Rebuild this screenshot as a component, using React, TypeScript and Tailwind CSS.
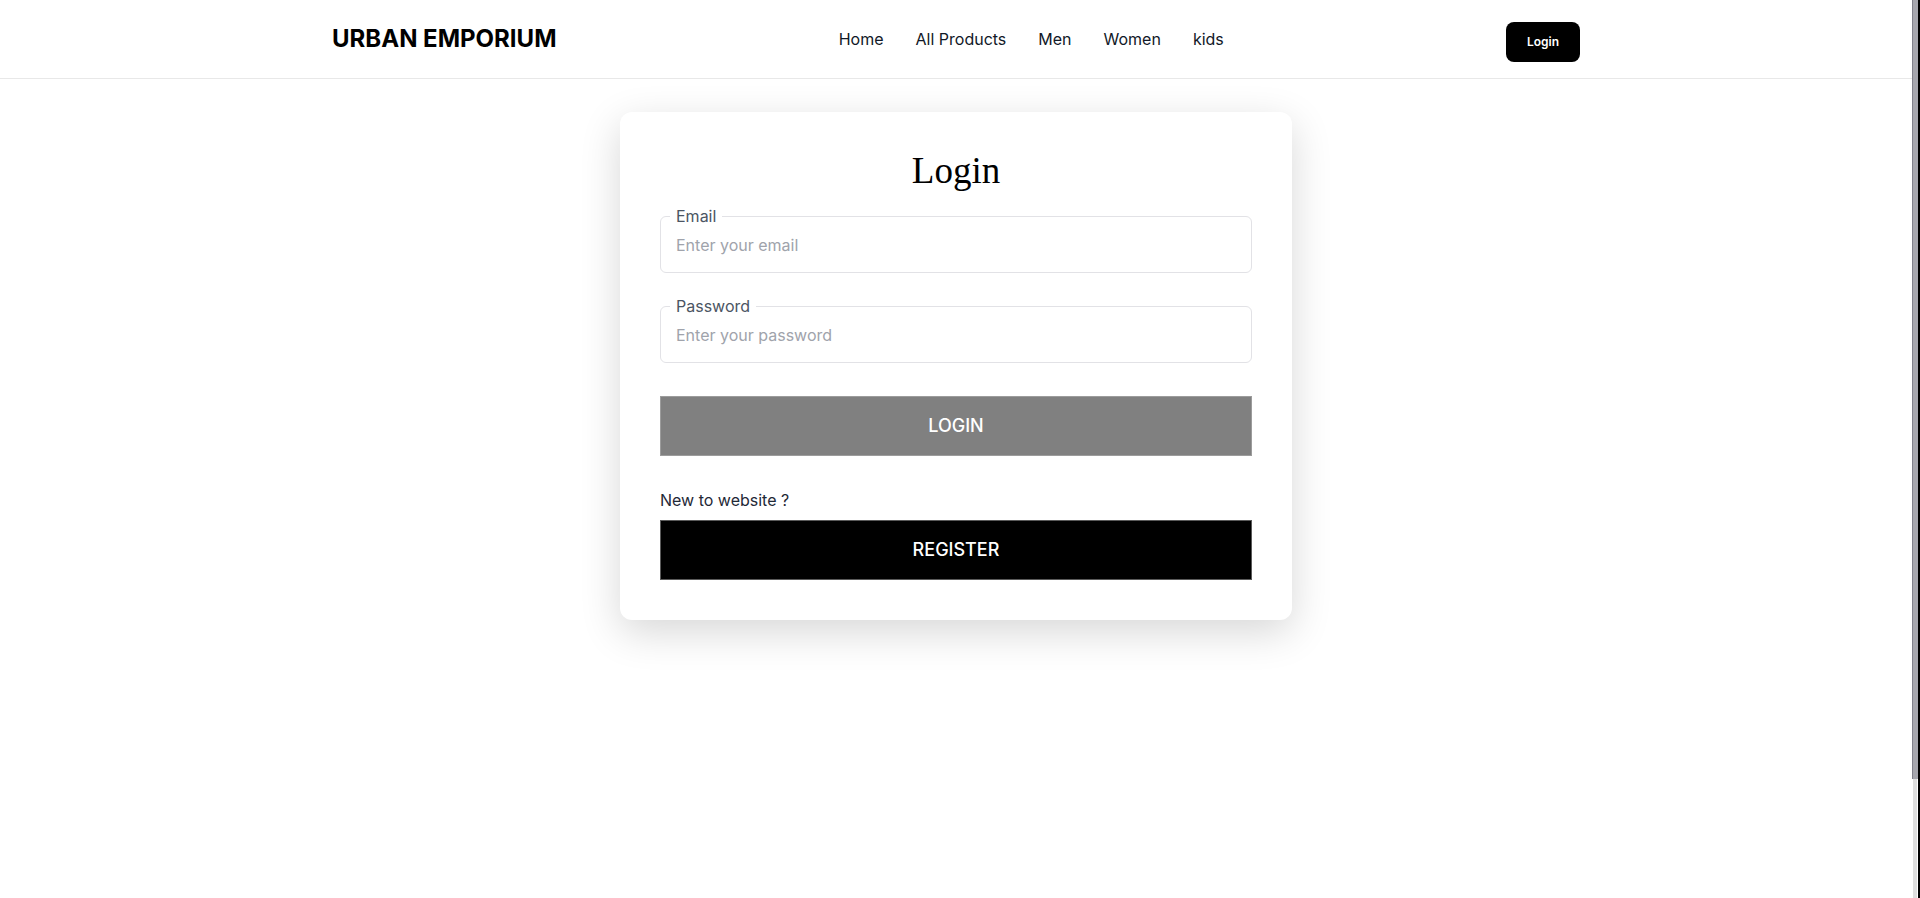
import { useState } from "react";

const navLinks = ["Home", "All Products", "Men", "Women", "kids"];

function Field({
  label,
  type,
  placeholder,
  className,
}: {
  label: string;
  type: string;
  placeholder: string;
  className?: string;
}) {
  const [value, setValue] = useState("");
  return (
    <fieldset
      className={`rounded-md border border-[#e2e2e6] px-[15px] pb-[15px] ${className ?? ""}`}
    >
      <legend className="-ml-[6px] px-[6px] text-base leading-6 text-[#4b5563]">
        {label}
      </legend>
      <input
        type={type}
        value={value}
        onChange={(e) => setValue(e.target.value)}
        placeholder={placeholder}
        className="mt-[5px] block h-6 w-full bg-transparent text-base leading-6 text-gray-900 outline-none placeholder:text-[#a0a3ab]"
      />
    </fieldset>
  );
}

export default function App() {
  return (
    <div className="flex h-[898px] w-full overflow-hidden bg-white font-['Inter','Liberation_Sans',sans-serif]">
      <div className="flex min-w-0 flex-1 flex-col">
        <header className="border-b border-[#e8e8e8]">
          <div className="mx-auto flex h-[78px] max-w-7xl items-center justify-between px-4">
            <a href="#" className="text-2xl font-bold text-black">
              URBAN EMPORIUM
            </a>
            <nav className="flex items-center gap-8 text-base text-[#111827]">
              {navLinks.map((link) => (
                <a key={link} href="#">
                  {link}
                </a>
              ))}
            </nav>
            <button className="mt-[6px] h-10 w-[74px] rounded-lg bg-black text-xs font-semibold text-white">
              Login
            </button>
          </div>
        </header>

        <main className="flex justify-center pt-[33px]">
          <div className="w-full max-w-2xl rounded-xl bg-white p-10 shadow-[0_12px_40px_rgba(0,0,0,0.16)]">
            <h1 className="text-center font-['Liberation_Serif',serif] text-[37px] leading-none text-black">
              Login
            </h1>
            <form className="mt-[15px]" onSubmit={(e) => e.preventDefault()}>
              <Field label="Email" type="email" placeholder="Enter your email" />
              <Field
                label="Password"
                type="password"
                placeholder="Enter your password"
                className="mt-[21px]"
              />
              <button
                type="submit"
                className="mt-[33px] h-[60px] w-full border border-[#9c9c9c] bg-[#808080] text-lg font-medium text-white"
              >
                LOGIN
              </button>
            </form>
            <p className="mt-8 text-base leading-6 text-[#1f2937]">
              New to website ?
            </p>
            <button className="mt-2 h-[60px] w-full border border-[#5a5a5a] bg-black text-lg font-medium text-white">
              REGISTER
            </button>
          </div>
        </main>
      </div>

      {/* scrollbar strip from the capture */}
      <div className="flex w-2 shrink-0">
        <div className="flex w-[6px] flex-col">
          <div className="h-[779px] border-l border-[#80808a] bg-[#a6a6ad]" />
          <div className="flex-1 px-px">
            <div className="h-full bg-[#dedede]" />
          </div>
        </div>
        <div className="w-[2px] bg-black" />
      </div>
    </div>
  );
}
